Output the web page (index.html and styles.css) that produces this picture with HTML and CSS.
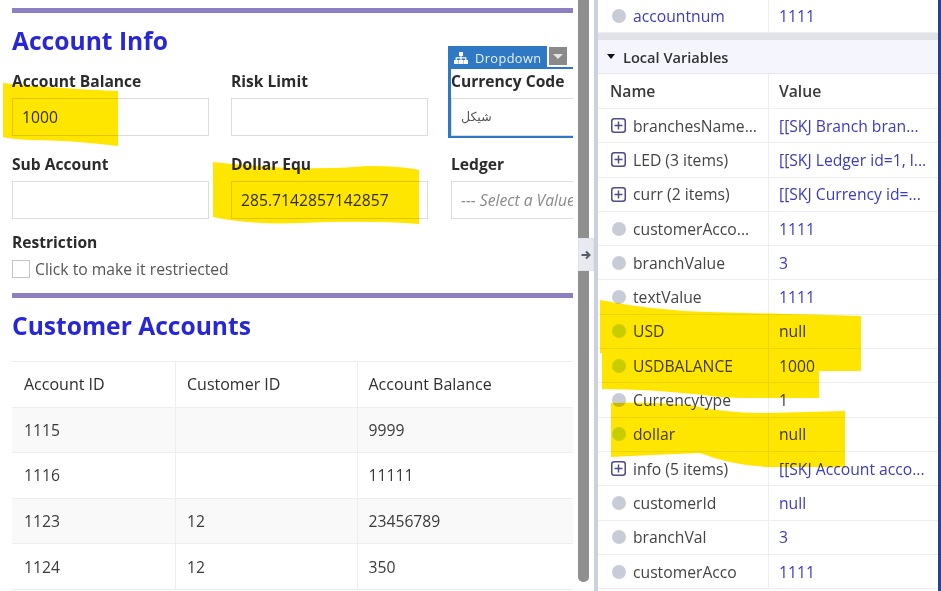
FILE: index.html
```html
<!DOCTYPE html>
<html>
<head>
    <title>Account Info</title>
    <meta name="viewport" content="width=device-width, initial-scale=1">
    <link rel="stylesheet" href="styles.css">
</head>
<body>
    <div class="page">
        <main class="left">
            <div class="bar"></div>
            <h2 class="title">Account Info</h2>
            <div class="form">
                <div class="field">
                    <label>Account Balance</label>
                    <div class="input">1000</div>
                </div>
                <div class="field">
                    <label>Risk Limit</label>
                    <div class="input"></div>
                </div>
                <div class="field selected">
                    <label>Currency Code</label>
                    <div class="input arabic">شيكل</div>
                </div>
                <div class="field">
                    <label>Sub Account</label>
                    <div class="input"></div>
                </div>
                <div class="field">
                    <label>Dollar Equ</label>
                    <div class="input">285.7142857142857</div>
                </div>
                <div class="field">
                    <label>Ledger</label>
                    <div class="input placeholder">--- Select a Value</div>
                </div>
            </div>
            <div class="restriction">
                <label>Restriction</label>
                <div class="check"><span class="box"></span>Click to make it restriected</div>
            </div>
            <div class="bar"></div>
            <h2 class="title">Customer Accounts</h2>
            <div class="table_wrap">
                <table>
                    <thead>
                        <tr><th>Account ID</th><th>Customer ID</th><th>Account Balance</th></tr>
                    </thead>
                    <tbody>
                        <tr><td>1115</td><td></td><td>9999</td></tr>
                        <tr><td>1116</td><td></td><td>11111</td></tr>
                        <tr><td>1123</td><td>12</td><td>23456789</td></tr>
                        <tr><td>1124</td><td>12</td><td>350</td></tr>
                    </tbody>
                </table>
            </div>
        </main>

        <div class="scrollbar"><div class="thumb"></div></div>

        <div class="divider">
            <div class="handle">
                <svg width="10" height="10" viewBox="0 0 10 10"><path d="M0.5 5H8M5 1.5L8.5 5L5 8.5" fill="none" stroke="#555c68" stroke-width="2"/></svg>
            </div>
        </div>

        <aside class="right">
            <div class="row first">
                <div class="name"><span class="dot"></span><span class="link">accountnum</span></div>
                <div class="value">1111</div>
            </div>
            <div class="section"><span class="caret"></span>Local Variables</div>
            <div class="row head">
                <div class="name">Name</div>
                <div class="value">Value</div>
            </div>
            <div class="row">
                <div class="name"><svg class="plus" viewBox="0 0 15 15"><rect x="0.75" y="0.75" width="13.5" height="13.5" rx="2.5"/><path d="M3.5 7.5H11.5M7.5 3.5V11.5"/></svg>branchesName...</div>
                <div class="value">[[SKJ Branch bran...</div>
            </div>
            <div class="row">
                <div class="name"><svg class="plus" viewBox="0 0 15 15"><rect x="0.75" y="0.75" width="13.5" height="13.5" rx="2.5"/><path d="M3.5 7.5H11.5M7.5 3.5V11.5"/></svg>LED (3 items)</div>
                <div class="value">[[SKJ Ledger id=1, l...</div>
            </div>
            <div class="row">
                <div class="name"><svg class="plus" viewBox="0 0 15 15"><rect x="0.75" y="0.75" width="13.5" height="13.5" rx="2.5"/><path d="M3.5 7.5H11.5M7.5 3.5V11.5"/></svg>curr (2 items)</div>
                <div class="value">[[SKJ Currency id=...</div>
            </div>
            <div class="row">
                <div class="name"><span class="dot"></span>customerAcco...</div>
                <div class="value">1111</div>
            </div>
            <div class="row">
                <div class="name"><span class="dot"></span>branchValue</div>
                <div class="value">3</div>
            </div>
            <div class="row">
                <div class="name"><span class="dot"></span>textValue</div>
                <div class="value">1111</div>
            </div>
            <div class="row">
                <div class="name"><span class="dot lit"></span>USD</div>
                <div class="value dark">null</div>
            </div>
            <div class="row">
                <div class="name"><span class="dot lit"></span>USDBALANCE</div>
                <div class="value dark">1000</div>
            </div>
            <div class="row">
                <div class="name"><span class="dot"></span>Currencytype</div>
                <div class="value dark">1</div>
            </div>
            <div class="row">
                <div class="name"><span class="dot lit"></span>dollar</div>
                <div class="value dark">null</div>
            </div>
            <div class="row">
                <div class="name"><svg class="plus" viewBox="0 0 15 15"><rect x="0.75" y="0.75" width="13.5" height="13.5" rx="2.5"/><path d="M3.5 7.5H11.5M7.5 3.5V11.5"/></svg>info (5 items)</div>
                <div class="value">[[SKJ Account acco...</div>
            </div>
            <div class="row">
                <div class="name"><span class="dot"></span>customerId</div>
                <div class="value">null</div>
            </div>
            <div class="row">
                <div class="name"><span class="dot"></span>branchVal</div>
                <div class="value">3</div>
            </div>
            <div class="row">
                <div class="name"><span class="dot"></span>customerAcco</div>
                <div class="value">1111</div>
            </div>
        </aside>
    </div>

    <!-- dropdown tag over the selected field -->
    <div class="tag">
        <div class="tag_label">
            <svg width="14" height="12" viewBox="0 0 14 12"><path d="M5 0H9V4H7.6V5.2H12.4V8H14V12H9.6V8H11.2V6.4H7.6V8H9.2V12H4.8V8H6.4V6.4H2.8V8H4.4V12H0V8H1.6V5.2H6.4V4H5Z" fill="#fff"/></svg>
            Dropdown
        </div>
        <div class="tag_button"><span></span></div>
    </div>

    <!-- marker strokes drawn over the screenshot -->
    <svg class="marker" width="941" height="591" viewBox="0 0 941 591">
        <path d="M3 83Q50 88 118 91V146Q70 140 30 140Q10 139 3 137Z"/>
        <path d="M213 162Q300 172 367 166Q400 166 419 170V224Q370 220 300 223Q250 225 213 217Z"/>
        <path d="M600 300Q650 310 707 312Q790 314 861 316V371H819V398H747Q720 398 703 395Q650 389 602 389V353H600Z"/>
        <path d="M611 403Q650 402 690 405Q730 414 767 413L845 411V467H767Q730 465 700 453Q650 455 611 457Z"/>
    </svg>
</body>
</html>
```

FILE: styles.css
```css
* {
    box-sizing: border-box;
}
html, body {
    margin: 0;
    height: 100%;
    overflow: hidden;
    background: #fff;
    font-family: "Open Sans", sans-serif;
    font-size: 15.7px;
    color: #333;
}
.page {
    display: flex;
    width: 941px;
    height: 591px;
    overflow: hidden;
}

/* left pane */
.left {
    width: 561px;
    margin-left: 12px;
    padding-top: 8px;
    flex: none;
    overflow: hidden;
}
.bar {
    height: 5px;
    background: #8d7fc2;
}
.title {
    margin: 0;
    height: 56px;
    line-height: 56px;
    font-size: 24.6px;
    font-weight: 700;
    color: #2727d8;
}
.form {
    display: grid;
    grid-template-columns: 219px 220px 197px;
    row-gap: 16px;
    width: 640px;
}
label {
    display: block;
    height: 29px;
    line-height: 24px;
    font-weight: 700;
    font-size: 15.6px;
    color: #2b2b2b;
}
.input {
    width: 197px;
    height: 38px;
    line-height: 36px;
    padding: 0 9px;
    border: 1px solid #dcdcdc;
    white-space: nowrap;
    overflow: hidden;
    color: #333;
}
.arabic {
    font-family: "DejaVu Sans", sans-serif;
    font-size: 12.5px;
    color: #555;
}
.placeholder {
    font-style: italic;
    color: #8a8a8a;
}
.restriction {
    margin-top: 11px;
    height: 63px;
}
.restriction label {
    height: 30px;
}
.check {
    display: flex;
    align-items: center;
    color: #555;
    height: 18px;
}
.box {
    width: 18px;
    height: 18px;
    margin-right: 5px;
    border: 1px solid #c4c4c4;
}
.table_wrap {
    margin-left: -1px;
    margin-top: 7px;
}
table {
    border-collapse: collapse;
    table-layout: fixed;
    width: 640px;
}
th, td {
    height: 45.6px;
    padding: 0 11px;
    border: 1px solid #eeeeee;
    text-align: left;
    font-weight: 400;
    color: #3a3a3a;
}
th {
    font-size: 16px;
    font-weight: 500;
    color: #2f2f2f;
}
th:nth-child(1), td:nth-child(1) {
    width: 164px;
    padding-left: 12px;
}
th:nth-child(2), td:nth-child(2) {
    width: 182px;
}
th:nth-child(3), td:nth-child(3) {
    padding-left: 10.5px;
}
tbody tr:nth-child(odd) {
    background: #f9f9f9;
}

/* scrollbar and pane divider */
.scrollbar {
    width: 16px;
    flex: none;
    padding-left: 5px;
}
.thumb {
    width: 11px;
    height: 582px;
    background: #8f8f8f;
    border-radius: 0 0 5px 5px;
}
.divider {
    position: relative;
    width: 4px;
    flex: none;
    background: #ccd1de;
    margin-left: 5px;
}
.handle {
    position: absolute;
    left: -16px;
    top: 238px;
    width: 16px;
    height: 33px;
    background: #e8eaf0;
    border: 1px solid #dfe2ea;
    display: flex;
    align-items: center;
    justify-content: center;
}

/* right pane */
.right {
    width: 343px;
    border-right: 3px solid #2f3f8f;
    flex: none;
    background: #fff;
    color: #444;
}
.row {
    display: flex;
    height: 34.3px;
    border-bottom: 1px solid #eceef2;
    align-items: stretch;
}
.row.first {
    height: 33px;
}
.row.head {
    height: 35px;
}
.name {
    display: flex;
    align-items: center;
    width: 171px;
    padding-left: 14px;
    border-right: 1px solid #eceef2;
    white-space: nowrap;
    overflow: hidden;
}
.value {
    display: flex;
    align-items: center;
    padding-left: 10px;
    white-space: nowrap;
    color: #3b3bc4;
}
.value.dark {
    color: #3f3f3f;
}
.link {
    color: #3b3bc4;
}
.head .name {
    padding-left: 12px;
}
.head .name, .head .value {
    font-weight: 600;
    color: #3a3a3a;
}
.section {
    display: flex;
    align-items: center;
    height: 41px;
    border-top: 7px solid #e2e3e9;
    border-bottom: 1px solid #e6e7ee;
    background: #f5f6fd;
    font-size: 14.6px;
    font-weight: 600;
    color: #333;
}
.caret {
    margin: 0 8px 0 9px;
    border-left: 4.5px solid transparent;
    border-right: 4.5px solid transparent;
    border-top: 5px solid #111;
}
.dot {
    width: 14px;
    height: 14px;
    margin-right: 7px;
    border-radius: 50%;
    background: #c8ccd6;
    flex: none;
}
.dot.lit {
    background: #c8e2d6;
}
.plus {
    width: 15px;
    height: 15px;
    margin-left: -1px;
    margin-right: 7px;
    flex: none;
    fill: none;
    stroke: #4c4c86;
    stroke-width: 1.5;
}

/* dropdown tag */
.tag {
    position: absolute;
    left: 448px;
    top: 46px;
    display: flex;
}
.tag_label {
    display: flex;
    align-items: center;
    gap: 7px;
    width: 99px;
    height: 23px;
    padding-left: 6px;
    background: #2f78c4;
    color: #e8f0fa;
    font-size: 12.8px;
    letter-spacing: 0.4px;
}
.tag_button {
    width: 18px;
    height: 18px;
    margin: 1px 0 0 2px;
    background: #8a8a8a;
    display: flex;
    align-items: center;
    justify-content: center;
}
.tag_button span {
    border-left: 5px solid transparent;
    border-right: 5px solid transparent;
    border-top: 5px solid #e6e6e6;
}
.field.selected {
    position: relative;
}
.field.selected::after {
    content: "";
    box-sizing: border-box;
    position: absolute;
    left: -3px;
    top: -2px;
    width: 260px;
    height: 71px;
    border: 2px solid #2f78c4;
    border-left-width: 3px;
    pointer-events: none;
}

/* marker */
.marker {
    position: absolute;
    left: 0;
    top: 0;
    mix-blend-mode: multiply;
    pointer-events: none;
}
.marker path {
    fill: #ffe600;
}
```
